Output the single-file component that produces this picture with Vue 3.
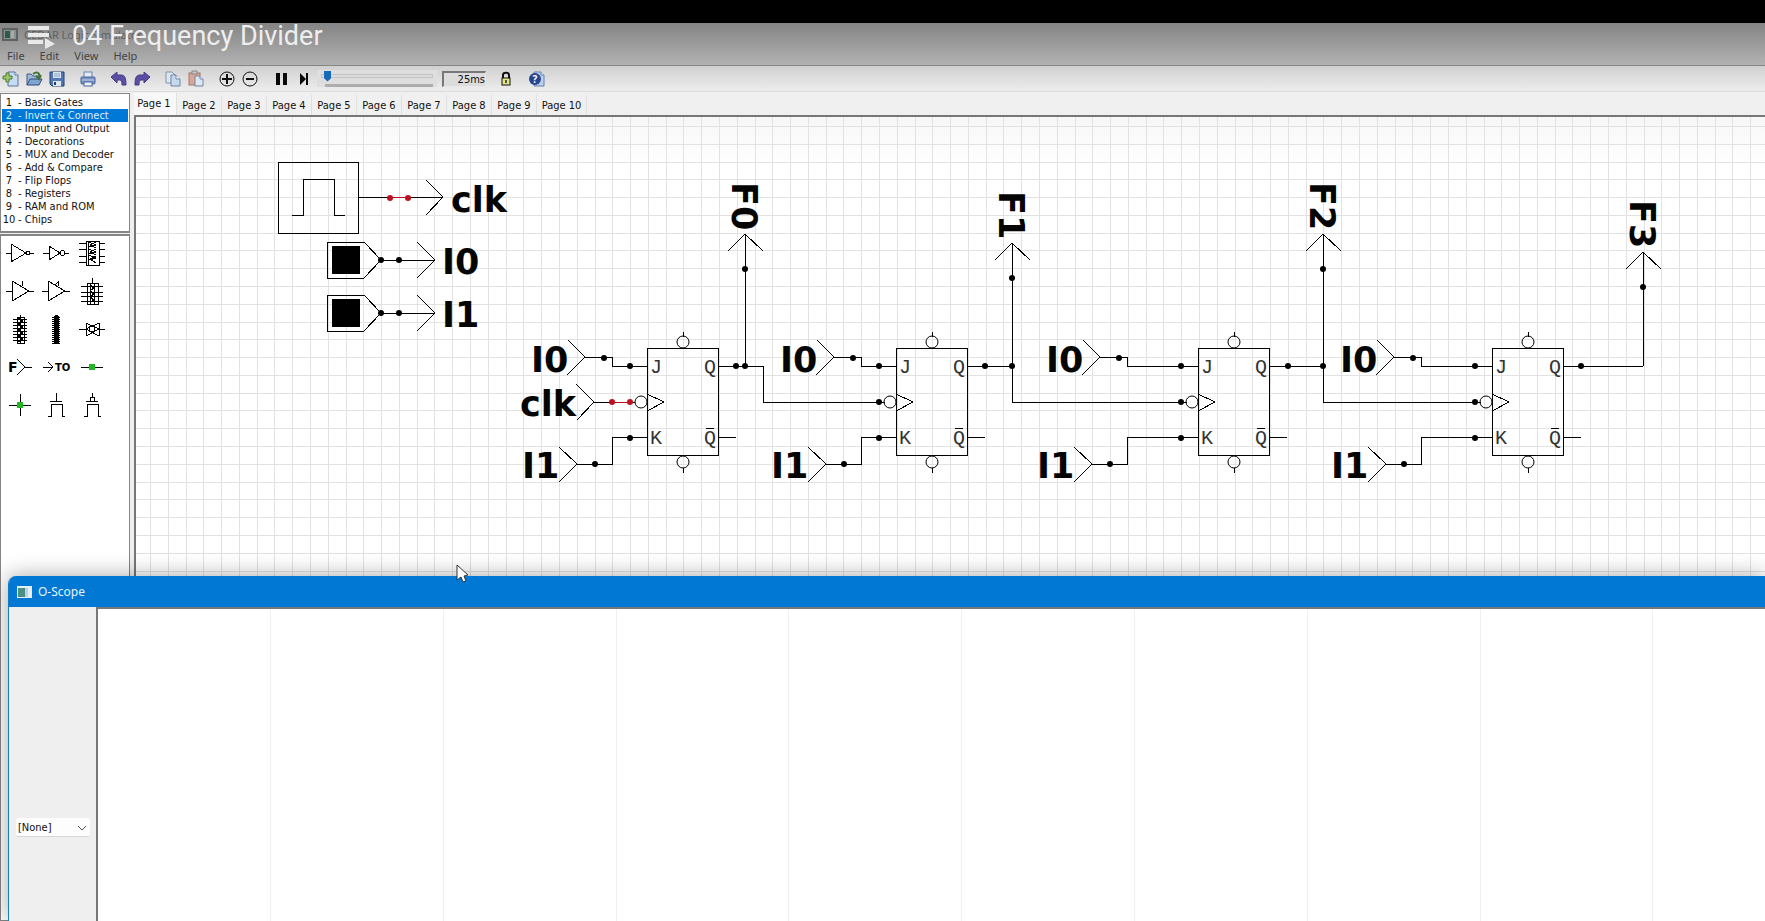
<script setup>
import { ref } from 'vue'

const menus = ['File', 'Edit', 'View', 'Help']
const libraries = [
  'Basic Gates', 'Invert & Connect', 'Input and Output', 'Decorations', 'MUX and Decoder',
  'Add & Compare', 'Flip Flops', 'Registers', 'RAM and ROM', 'Chips',
]
const activeLibrary = ref(1)
const pages = Array.from({ length: 10 }, (_, i) => `Page ${i + 1}`)
const activePage = ref(0)
const speed = ref(2)
const channel = ref('[None]')

const pitch = 17.78
const gridX = Array.from({ length: 140 }, (_, i) => Math.round(150 + i * pitch))
const gridY = Array.from({ length: 60 }, (_, i) => Math.round(126 + i * pitch))
const scopeLines = Array.from({ length: 16 }, (_, i) => Math.round(172 + i * 172.8))

// Each stage: left edge of the flip-flop body and the shift of its input labels.
const stages = [
  { x: 647, label: 0 },
  { x: 896, label: 249 },
  { x: 1198, label: 515 },
  { x: 1492, label: 809 },
]
const outputs = [
  { name: 'F0', x: 745, tip: 234, end: 366 },
  { name: 'F1', x: 1012, tip: 243, end: 402 },
  { name: 'F2', x: 1323, tip: 234, end: 402 },
  { name: 'F3', x: 1643, tip: 252, end: 366 },
]
const wires = [
  'M718 366H763V402H885',
  'M967 366H1012M1012 402H1187',
  'M1269 366H1323M1323 402H1481',
  'M1563 366H1643',
]
const dots = [[736, 366], [745, 366], [985, 366], [1012, 366], [1288, 366], [1323, 366], [1581, 366]]
const switches = [{ name: 'I0', y: 260 }, { name: 'I1', y: 313 }]

const parts = [
  { name: 'Inverter', d: 'M4 19H9M9 10V28L24 19ZM28 19H32M24 19a2 2 0 1 0 4 0a2 2 0 1 0 -4 0' },
  { name: 'Small inverter', d: 'M5 19H11M11 12V26L22 19ZM27 19H31M22 19a2 2 0 1 0 5 0a2 2 0 1 0 -5 0' },
  { name: 'Four inverters', d: 'M12 7H25V31H12ZM14 7V31M5 9H12M25 9H31M5 15H12M25 15H31M5 22H12M25 22H31M5 28H12M25 28H31M15 8L22 11L15 13M15 15L22 18L15 20M15 21L22 24L15 26M22 8L16 11L22 14M22 15L16 18L22 21M22 22L16 25L22 29' },
  { name: 'Tri-state buffer', d: 'M4 19H10M10 9V29L27 19ZM27 19H32M20 9V14' },
  { name: 'Inverted enable buffer', d: 'M4 19H10M10 9V29L27 19ZM27 19H32M20 9V14M17 13L20 10' },
  { name: 'Four buffers', d: 'M13 11H24V32H13ZM18 6V11M7 14H29M7 20H29M7 24H29M7 29H29M16 11V32M20 11V32M16 13L20 16L16 19L20 22L16 25L20 28L16 31' },
  { name: 'Eight buffers', d: 'M15 7H22V33H15ZM18 5V33M11 9H25M11 12H25M11 15H25M11 18H25M11 21H25M11 24H25M11 27H25M11 30H25M16 8L21 11L16 14L21 17L16 20L21 23L16 26L21 29L16 32' },
  { name: 'Sixteen buffers', d: 'M16 6V34M17 5V34M18 5V34M19 5V34M20 6V34M14 7H22M14 9H22M14 11H22M14 13H22M14 15H22M14 17H22M14 19H22M14 21H22M14 23H22M14 25H22M14 27H22M14 29H22M14 31H22M14 33H22' },
  { name: 'Transmission gate', d: 'M5 19H12M25 19H31M12 13V26M25 13V26M15 19a3 3 0 1 0 6 0a3 3 0 1 0 -6 0M12 13L25 19L12 26M25 13L12 19L25 26' },
  { name: 'From', d: 'M15 11L23 19L15 27M23 19H30', text: 'F', tx: 6, ty: 24, size: 14 },
  { name: 'To', d: 'M5 19H15M10 14L15 19L10 24', text: 'TO', tx: 17, ty: 23, size: 10 },
  { name: 'Connector', d: 'M7 19H29', node: true },
  { name: 'Junction', d: 'M7 19H29M18 8V30', node: true },
  { name: 'NMOS', d: 'M18 7V15M12 15H24M10 30H13V18H24V30H27' },
  { name: 'PMOS', d: 'M18 7V11M16 11H20V15H16ZM12 15H24M10 30H13V18H24V30H27' },
]
</script>

<template>
  <div class="screen">
    <div class="letterbox"></div>

    <header class="titlebar">
      <div class="app-name">
        <svg width="16" height="13" viewBox="0 0 16 13" aria-hidden="true">
          <rect x="0" y="0" width="16" height="13" fill="#5c6260" />
          <rect x="2" y="2" width="12" height="9" fill="#8a918f" />
          <rect x="3" y="3" width="5" height="7" fill="#2d5a4d" />
          <rect x="9" y="3" width="3" height="7" fill="#a3abab" />
        </svg>
        <span>CEDAR Logic Simulator</span>
      </div>
      <nav class="menubar">
        <button v-for="m in menus" :key="m" type="button">{{ m }}</button>
      </nav>
      <div class="video-title">
        <svg width="28" height="26" viewBox="0 0 28 26" aria-hidden="true">
          <path d="M0 3H21V7H0ZM0 10H21V14H0ZM0 17H15V21H0Z" fill="#e9e9e9" />
          <path d="M17 15L27 21L17 26Z" fill="#e9e9e9" />
        </svg>
        <span>04 Frequency Divider</span>
      </div>
    </header>

    <div class="toolbar">
      <div class="tools">
        <button type="button" aria-label="New">
          <svg width="18" height="18" viewBox="0 0 18 18">
            <path d="M6 2H13L16 5V16H6Z" fill="#c6dcf0" stroke="#60759c" />
            <path d="M13 2V5H16" fill="#fff" stroke="#60759c" />
            <path d="M4 3H7V6H10V9H7V12H4V9H1V6H4Z" fill="#9fc56d" stroke="#4e7a36" />
          </svg>
        </button>
        <button type="button" aria-label="Open">
          <svg width="18" height="18" viewBox="0 0 18 18">
            <path d="M2 15V4H6L8 6H13V9" fill="#9db9d8" stroke="#40598a" />
            <path d="M2 15L5 9H17L14 15Z" fill="#7fa6d0" stroke="#334d7d" />
            <path d="M8 4C12 1 15 3 14 7M11 6L14 9L16 5" fill="none" stroke="#47743c" stroke-width="2" />
          </svg>
        </button>
        <button type="button" aria-label="Save">
          <svg width="18" height="18" viewBox="0 0 18 18">
            <path d="M2 2H16V16H4L2 14Z" fill="#5379b4" stroke="#24406f" />
            <rect x="5" y="2" width="8" height="6" fill="#d5e2ef" />
            <path d="M6 4H12M6 6H12" stroke="#8fa6c2" />
            <rect x="5" y="11" width="8" height="5" fill="#dfe7ef" />
            <rect x="6" y="12" width="2" height="3" fill="#24406f" />
          </svg>
        </button>
      </div>
      <div class="tools">
        <button type="button" aria-label="Print">
          <svg width="18" height="18" viewBox="0 0 18 18">
            <rect x="5" y="2" width="8" height="6" fill="#e2eaf4" stroke="#6a82ad" />
            <rect x="2" y="7" width="14" height="7" rx="1" fill="#7592c3" stroke="#4c659b" />
            <path d="M3 10H15" stroke="#c9d7ec" />
            <rect x="5" y="12" width="8" height="4" fill="#edf2f8" stroke="#4c659b" />
          </svg>
        </button>
      </div>
      <div class="tools">
        <button type="button" aria-label="Undo">
          <svg width="18" height="18" viewBox="0 0 18 18">
            <path d="M1 7L7 2V5H11C15 5 16 8 16 15H12C12 11 11 10 9 10H7V13Z" fill="#5b4fa3" stroke="#463b86" />
          </svg>
        </button>
        <button type="button" aria-label="Redo">
          <svg width="18" height="18" viewBox="0 0 18 18">
            <path d="M17 7L11 2V5H7C3 5 2 8 2 15H6C6 11 7 10 9 10H11V13Z" fill="#5b4fa3" stroke="#463b86" />
          </svg>
        </button>
      </div>
      <div class="tools">
        <button type="button" aria-label="Copy">
          <svg width="18" height="18" viewBox="0 0 18 18">
            <path d="M2 2H8L11 5V13H2Z" fill="#dce6ef" stroke="#8394ae" />
            <path d="M7 5H12L16 9V16H7Z" fill="#c9d9ec" stroke="#6f83a5" />
            <path d="M12 5V9H16" fill="#fff" stroke="#6f83a5" />
          </svg>
        </button>
        <button type="button" aria-label="Paste">
          <svg width="18" height="18" viewBox="0 0 18 18">
            <rect x="2" y="3" width="11" height="12" fill="#d9a795" stroke="#a3766a" />
            <rect x="5" y="1" width="5" height="3" fill="#c9c9c9" stroke="#888" />
            <path d="M8 6H13L16 9V16H8Z" fill="#dbe7f2" stroke="#72879f" />
            <path d="M13 6V9H16" fill="#fff" stroke="#72879f" />
          </svg>
        </button>
      </div>
      <div class="tools">
        <button type="button" aria-label="Zoom in">
          <svg width="18" height="18" viewBox="0 0 18 18" fill="none" stroke="#111">
            <circle cx="9" cy="9" r="7" /><path d="M4 9H14M9 4V14" stroke-width="2" />
          </svg>
        </button>
        <button type="button" aria-label="Zoom out">
          <svg width="18" height="18" viewBox="0 0 18 18" fill="none" stroke="#111">
            <circle cx="9" cy="9" r="7" /><path d="M5 9H13" stroke-width="2" />
          </svg>
        </button>
      </div>
      <div class="tools">
        <button type="button" aria-label="Pause">
          <svg width="18" height="18" viewBox="0 0 18 18"><path d="M4 3H8V15H4ZM11 3H15V15H11Z" fill="#080808" /></svg>
        </button>
        <button type="button" aria-label="Step">
          <svg width="18" height="18" viewBox="0 0 18 18"><path d="M5 3L11 9L5 15ZM11 3H13V15H11Z" fill="#080808" /></svg>
        </button>
      </div>
      <div class="speed">
        <input v-model="speed" type="range" min="0" max="100" aria-label="Simulation speed" />
      </div>
      <output class="interval">25ms</output>
      <button type="button" class="lock" aria-label="Lock">
        <svg width="12" height="18" viewBox="0 0 12 18">
          <path d="M3 9V5C3 2 9 2 9 5V9" fill="none" stroke="#111" stroke-width="2" />
          <rect x="2" y="8" width="8" height="7" fill="#e2e580" stroke="#111" />
          <rect x="5" y="10" width="2" height="3" fill="#555" />
        </svg>
      </button>
      <button type="button" aria-label="Help topics">
        <svg width="18" height="18" viewBox="0 0 18 18">
          <path d="M6 2H13L16 5V16H6Z" fill="#b9d2ee" stroke="#6681ab" />
          <path d="M13 2V5H16" fill="#fff" stroke="#6681ab" />
          <circle cx="7" cy="9" r="6" fill="#2a4590" />
          <text x="7" y="13" text-anchor="middle" class="help-mark">?</text>
        </svg>
      </button>
    </div>

    <main class="workspace">
      <aside class="sidebar">
        <ul class="libraries">
          <li v-for="(name, i) in libraries" :key="name">
            <button type="button" :class="{ active: activeLibrary === i }" @click="activeLibrary = i">
              <span class="num">{{ i + 1 }}</span><span>- {{ name }}</span>
            </button>
          </li>
        </ul>
        <div class="parts">
          <button v-for="p in parts" :key="p.name" type="button" :aria-label="p.name">
            <svg width="36" height="38" viewBox="-1 2 36 38">
              <path :d="p.d" class="ink" />
              <rect v-if="p.node" x="15" y="16" width="6" height="6" fill="#22b822" />
              <text v-if="p.text" :x="p.tx" :y="p.ty" :font-size="p.size" class="bold">{{ p.text }}</text>
            </svg>
          </button>
        </div>
      </aside>

      <section class="document">
        <div class="tabs">
          <button
            v-for="(p, i) in pages" :key="p" type="button"
            :class="{ active: activePage === i }" @click="activePage = i"
          >{{ p }}</button>
        </div>
        <div class="canvas">
          <svg width="100%" height="100%">
            <g transform="translate(-136 -117)">
              <g class="grid">
                <line v-for="x in gridX" :key="'x' + x" :x1="x" :x2="x" y1="100" y2="1200" />
                <line v-for="y in gridY" :key="'y' + y" :y1="y" :y2="y" x1="130" x2="2700" />
              </g>

              <path class="ink" d="M278 162H358V233H278ZM292 215H303V179H334V215H345M358 197H443" />
              <path class="ink" d="M426 180L443 197L426 215" />
              <path class="live" d="M390 197H408" />
              <circle cx="390" cy="198" r="3" class="live-dot" />
              <circle cx="408" cy="198" r="3" class="live-dot" />
              <text x="451" y="212" class="label">clk</text>

              <g v-for="s in switches" :key="s.name" :transform="`translate(0 ${s.y})`">
                <path class="ink" d="M364 -18H327V18H364M381 0H435" />
                <path class="ink" d="M364 -18L381 0L364 18M417 -18L435 0L417 18" />
                <rect x="332" y="-14" width="28" height="28" />
                <circle cx="381" cy="0" r="3" />
                <circle cx="399" cy="0" r="3" />
                <text x="442" y="14" class="label">{{ s.name }}</text>
              </g>

              <g v-for="(s, i) in stages" :key="s.x">
                <g :transform="`translate(${s.label} 0)`">
                  <path class="ink" d="M568 340L585 357L567 375M559 447L577 464L559 482" />
                  <path class="ink" d="M585 357H612V366M577 464H612V437" />
                  <circle cx="604" cy="358" r="3" />
                  <circle cx="595" cy="464" r="3" />
                  <text x="531" y="372" class="label">I0</text>
                  <text x="522" y="478" class="label">I1</text>
                </g>
                <path class="ink" :d="`M${s.label + 612} 366H${s.x}M${s.label + 612} 437H${s.x}`" />
                <g :transform="`translate(${s.x} 0)`">
                  <path class="ink" d="M0 348H71V455H0ZM71 437H89M36 332V337M36 468V473M-17 402H-12" />
                  <path class="ink" d="M0 394L17 402L0 411" />
                  <circle cx="36" cy="342" r="6" class="bubble" />
                  <circle cx="36" cy="462" r="6" class="bubble" />
                  <circle cx="-6" cy="402" r="6" class="bubble" />
                  <circle cx="-17" cy="366" r="3" />
                  <circle v-if="i" cx="-17" cy="402" r="3" />
                  <circle cx="-17" cy="438" r="3" />
                  <text x="3" y="373" class="pin">J</text>
                  <text x="3" y="444" class="pin">K</text>
                  <text x="57" y="373" class="pin">Q</text>
                  <text x="57" y="444" class="pin">Q</text>
                  <path class="ink" d="M59 428H67" />
                </g>
              </g>

              <path class="ink" d="M576 384L594 402L577 420" />
              <path class="ink" d="M594 402H612" />
              <path class="live" d="M612 402H630" />
              <circle cx="612" cy="402" r="3" class="live-dot" />
              <circle cx="630" cy="402" r="3" class="live-dot" />
              <text x="520" y="416" class="label">clk</text>

              <path v-for="w in wires" :key="w" class="ink" :d="w" />
              <circle v-for="[x, y] in dots" :key="x" :cx="x" :cy="y" r="3" />

              <g v-for="o in outputs" :key="o.name">
                <path class="ink" :d="`M${o.x} ${o.tip}V${o.end}`" />
                <path class="ink" :d="`M${o.x - 17} ${o.tip + 17}L${o.x} ${o.tip}L${o.x + 18} ${o.tip + 17}`" />
                <circle :cx="o.x" :cy="o.tip + 35" r="3" />
                <text class="label" :transform="`translate(${o.x - 13} ${o.tip - 52}) rotate(90)`">{{ o.name }}</text>
              </g>
            </g>
          </svg>
        </div>
      </section>
    </main>

    <section class="scope">
      <header>
        <svg width="15" height="12" viewBox="0 0 15 12" aria-hidden="true">
          <rect width="15" height="12" fill="#e8eef0" />
          <rect x="1" y="2" width="7" height="9" fill="#4b8f86" />
          <rect x="8" y="2" width="3" height="9" fill="#b9d3e2" />
        </svg>
        <span>O-Scope</span>
      </header>
      <div class="scope-body">
        <div class="channels">
          <select v-model="channel" aria-label="Channel"><option>[None]</option></select>
          <svg width="10" height="6" viewBox="0 0 10 6" aria-hidden="true"><path d="M1 1L5 5L9 1" fill="none" stroke="#555" /></svg>
        </div>
        <div class="trace">
          <svg width="100%" height="100%">
            <line v-for="x in scopeLines" :key="x" :x1="x" :x2="x" y1="0" y2="2000" />
          </svg>
        </div>
      </div>
    </section>

    <svg class="cursor" width="13" height="20" viewBox="0 0 13 20" aria-hidden="true">
      <path d="M1 1V16L5 13L7 18L10 17L8 12L12 11Z" fill="#fff" stroke="#333" />
    </svg>
  </div>
</template>

<style>
body {
  margin: 0;
}
</style>

<style scoped>
.screen {
  position: relative;
  display: flex;
  flex-direction: column;
  height: 100vh;
  overflow: hidden;
  background: #f0f0f0;
  color: #111;
  font: 11px/13px "DejaVu Sans Condensed", "Noto Sans", sans-serif;
}
button {
  margin: 0;
  padding: 0;
  border: 0;
  background: none;
  color: inherit;
  font: inherit;
}
.letterbox {
  height: 23px;
  background: #000;
}
.titlebar {
  position: relative;
  height: 43px;
  box-sizing: border-box;
  background: linear-gradient(#848484, #b2b2b2);
  border-bottom: 1px solid #858585;
  font: 11px/19px "Noto Sans", sans-serif;
}
.app-name {
  display: flex;
  align-items: center;
  gap: 6px;
  height: 23px;
  padding-left: 2px;
  color: #606060;
}
.menubar {
  display: flex;
  gap: 15px;
  padding-left: 7px;
  color: #444;
}
.video-title {
  position: absolute;
  left: 28px;
  top: 0;
  display: flex;
  align-items: center;
  gap: 16px;
  color: #eee;
  font: 27px/26px Roboto, sans-serif;
  white-space: nowrap;
}
.toolbar {
  display: flex;
  align-items: center;
  height: 25px;
  background: linear-gradient(#d0d0d0, #ededed);
  border-bottom: 1px solid #dcdcdc;
}
.toolbar button {
  display: flex;
  justify-content: center;
  width: 23px;
}
.tools {
  display: flex;
  margin-right: 8px;
}
.tools:first-child {
  margin-left: -1px;
}
.speed {
  width: 112px;
  padding: 0 4px;
  margin-right: 5px;
  margin-left: -6px;
  background: #dedede;
}
.speed input {
  display: block;
  width: 100%;
  height: 17px;
  margin: 0;
  appearance: none;
  background: linear-gradient(#adadad, #adadad) 4px 14px / 108px 3px no-repeat;
}
.speed input::-webkit-slider-runnable-track {
  height: 4px;
  margin-bottom: 6px;
  border: 1px solid #c4c4c4;
  box-sizing: border-box;
  background: #dcdcdc;
}
.speed input::-webkit-slider-thumb {
  appearance: none;
  width: 7px;
  height: 11px;
  margin-top: -4px;
  background: #1469b8;
  clip-path: polygon(0 0, 100% 0, 100% 70%, 50% 100%, 0 70%);
}
.interval {
  width: 44px;
  height: 16px;
  box-sizing: border-box;
  border: 1px solid #e8e8e8;
  border-top: 2px solid #777;
  border-left: 2px solid #777;
  text-align: right;
  background: #dcdcdc;
}
.toolbar .lock {
  margin: 0 8px 0 8px;
}
.help-mark {
  fill: #fff;
  font: bold 10px "Noto Sans", sans-serif;
}
.workspace {
  display: flex;
  flex: 1;
  min-height: 0;
  padding-top: 1px;
}
.sidebar {
  display: flex;
  flex-direction: column;
  gap: 1px;
  width: 130px;
}
.libraries {
  height: 135px;
  margin: 0;
  padding: 2px 1px 0;
  list-style: none;
  background: #fff;
  border: 1px solid #858585;
  border-bottom-width: 2px;
}
.libraries button {
  display: flex;
  gap: 2px;
  width: 100%;
  text-align: left;
  line-height: 13px;
  white-space: nowrap;
}
.libraries .num {
  width: 14px;
  text-align: center;
}
.libraries .active {
  background: #0078d7;
  color: #d9efff;
}
.parts {
  display: grid;
  flex: 1;
  grid-template-columns: repeat(3, 36px);
  grid-auto-rows: 38px;
  background: #fff;
  border: 1px solid #858585;
  border-top-width: 2px;
}
.parts svg {
  display: block;
}
.bold {
  font-family: "DejaVu Sans", sans-serif;
  font-weight: bold;
}
.document {
  display: flex;
  flex: 1;
  flex-direction: column;
  min-width: 0;
  margin-left: 4px;
}
.tabs {
  display: flex;
  align-items: flex-end;
  height: 22px;
}
.tabs button {
  width: 45px;
  height: 20px;
  border-right: 1px solid #e0e0e0;
  white-space: nowrap;
}
.tabs button:last-child {
  width: 50px;
}
.tabs .active {
  height: 22px;
  width: 43px;
  padding-right: 2px;
  padding-bottom: 1px;
  background: #f8f8f8;
}
.canvas {
  flex: 1;
  min-height: 0;
  border: 2px solid #777;
  border-width: 2px 0 0 2px;
  background: linear-gradient(#f7f7f7, #fff 50px);
}
.canvas svg,
.trace svg {
  display: block;
}
.grid line {
  stroke: #e2e2e2;
  shape-rendering: crispEdges;
}
.ink {
  fill: none;
  stroke: #000;
  shape-rendering: crispEdges;
}
.bubble {
  fill: none;
  stroke: #000;
}
.live {
  stroke: #c01020;
  shape-rendering: crispEdges;
}
.live-dot {
  fill: #c01020;
}
.label {
  font: bold 35px "DejaVu Sans", sans-serif;
  fill: #050505;
}
.pin {
  font: 20px "Liberation Mono", monospace;
  fill: #333;
}
.scope {
  position: absolute;
  inset: 576px 0 0 8px;
  display: flex;
  flex-direction: column;
  border-left: 1px solid #1a7dc0;
  border-top-left-radius: 8px;
  background: #efefef;
  box-shadow: 0 0 22px rgba(0, 0, 0, 0.35);
  overflow: hidden;
}
.scope header {
  display: flex;
  align-items: center;
  gap: 6px;
  height: 31px;
  padding-left: 8px;
  background: #0078d4;
  color: #e6f4ff;
  font: 12px/16px "Noto Sans", sans-serif;
}
.scope-body {
  display: flex;
  flex: 1;
}
.channels {
  position: relative;
  width: 87px;
  padding-top: 211px;
  box-sizing: border-box;
}
.channels select {
  display: block;
  width: 74px;
  height: 19px;
  margin-left: 7px;
  padding: 0 2px;
  appearance: none;
  border: 0;
  border-bottom: 1px solid #d8d8d8;
  border-radius: 2px;
  background: #fdfdfd;
  color: #111;
  font: inherit;
}
.channels svg {
  position: absolute;
  left: 68px;
  top: 218px;
  pointer-events: none;
}
.trace {
  flex: 1;
  border: 2px solid #777;
  border-width: 2px 0 0 2px;
  background: #fff;
}
.trace line {
  stroke: #f0f0f0;
  shape-rendering: crispEdges;
}
.cursor {
  position: absolute;
  left: 456px;
  top: 564px;
}
</style>
